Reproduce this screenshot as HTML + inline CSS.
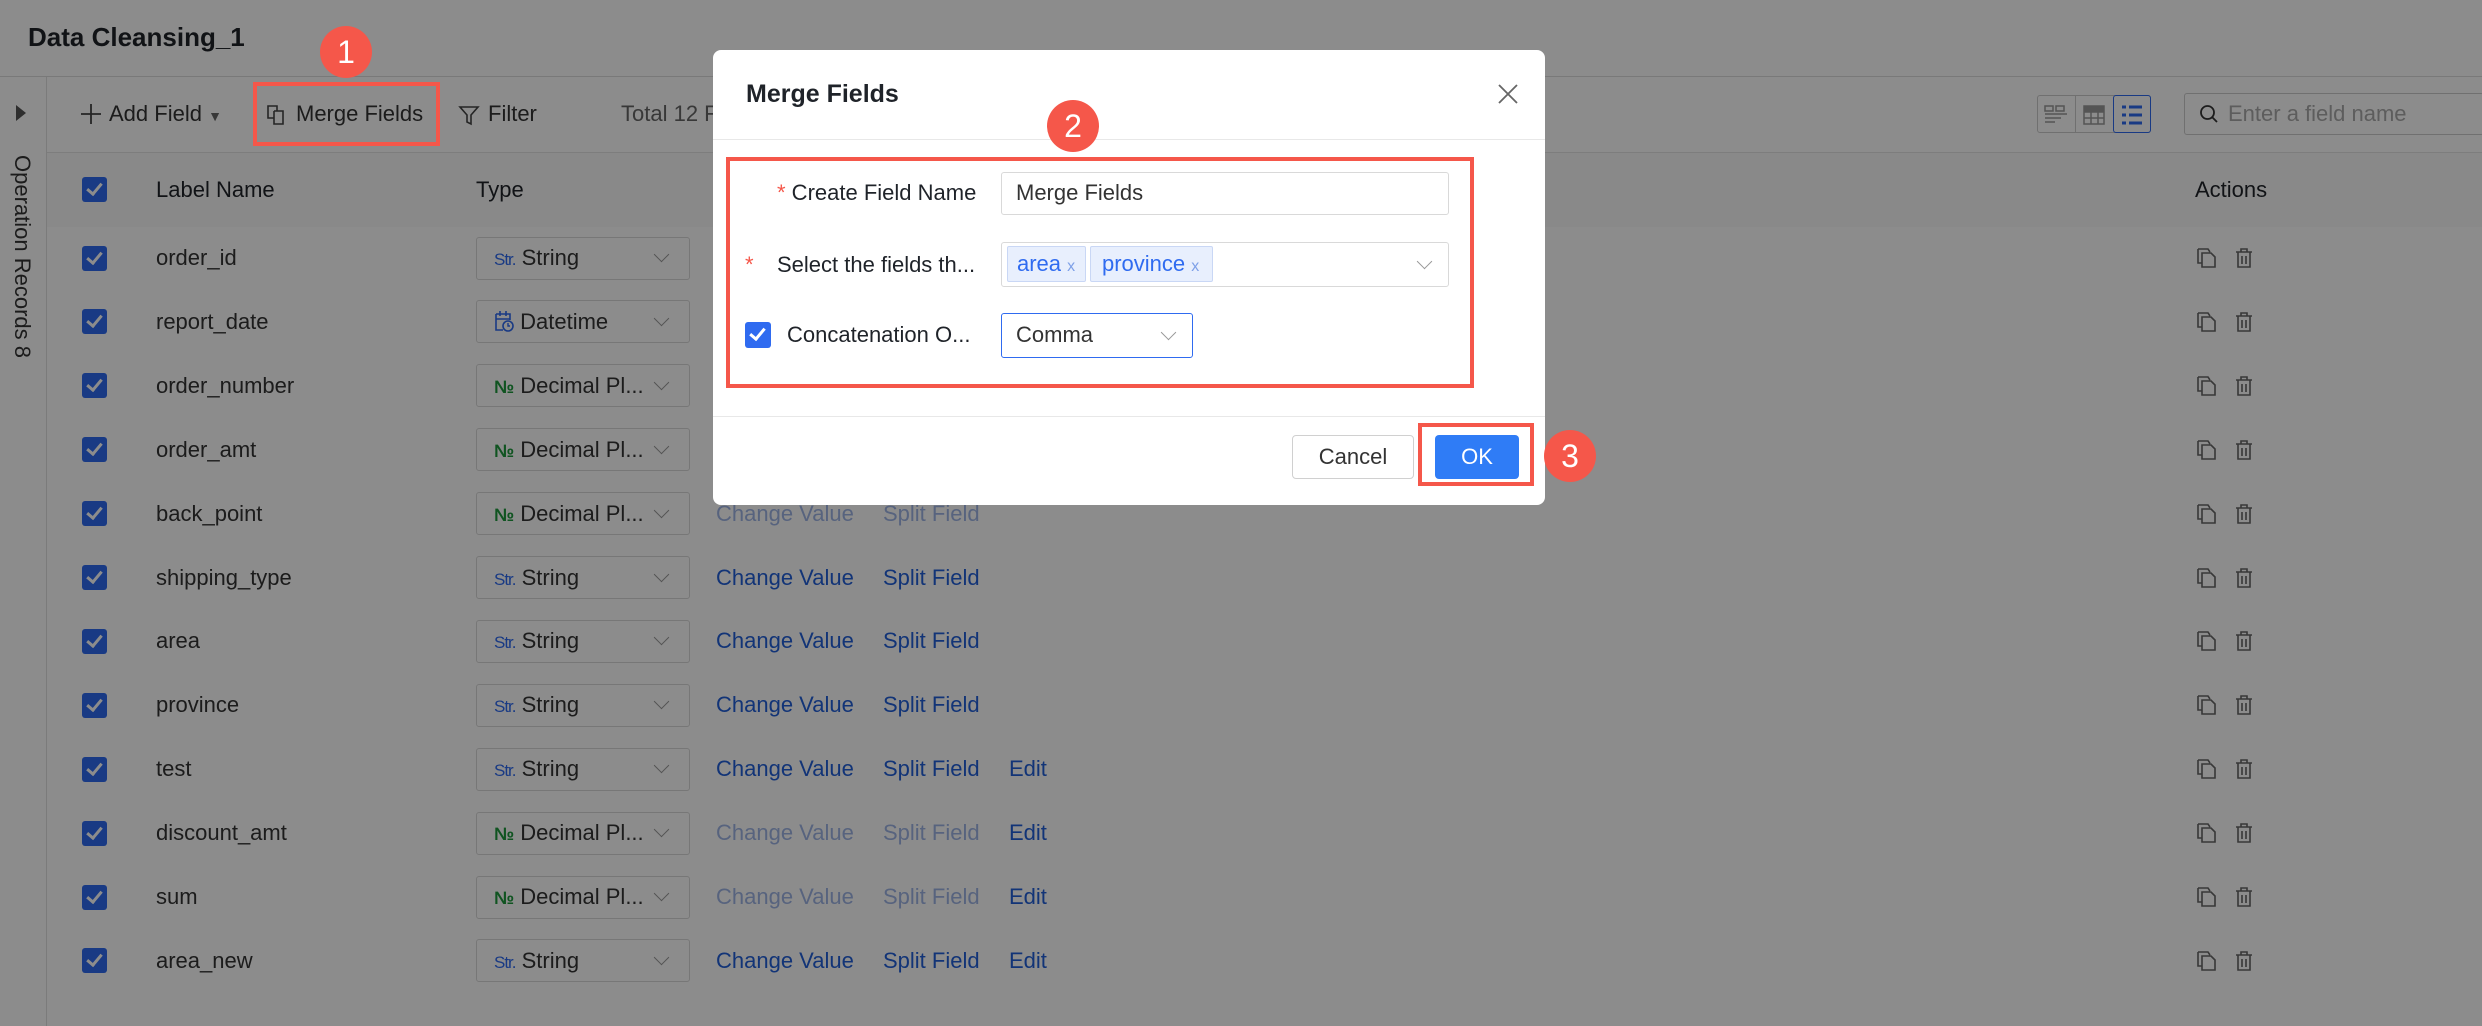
<!DOCTYPE html>
<html><head><meta charset="utf-8"><style>
*{box-sizing:border-box;margin:0;padding:0}
body{width:2482px;height:1026px;overflow:hidden;background:#fff;font-family:"Liberation Sans",Arial,sans-serif;color:#1f2329;position:relative}
.a{position:absolute;white-space:nowrap}
.t{font-size:22px;line-height:26px}
.cb{position:absolute;width:25px;height:25px;background:#2f6bf0;border-radius:3px}
.cb:after{content:"";position:absolute;left:8px;top:3px;width:6px;height:12px;border:solid #fff;border-width:0 3px 3px 0;transform:rotate(40deg)}
.sel{position:absolute;border:1px solid #d9d9d9;border-radius:3px;background:#fff}
.chev{position:absolute;width:11px;height:11px;border:solid #999;border-width:0 1.5px 1.5px 0;transform:rotate(45deg)}
.lk{color:#2260d9}.lkf{color:#9fb5e6}
.ov{position:absolute;left:0;top:0;width:2482px;height:1026px;background:rgba(0,0,0,.45)}
.badge{position:absolute;width:52px;height:52px;border-radius:50%;background:#f5574a;color:#fff;font-size:32px;line-height:52px;text-align:center}
.rb{position:absolute;border:4px solid #f5574a}
</style></head><body>
<div class="a" style="left:28px;top:22px;font-size:26px;font-weight:bold;line-height:30px">Data Cleansing_1</div>
<div class="a" style="left:0;top:76px;width:2482px;height:1px;background:#dcdcdc"></div>
<div class="a" style="left:46px;top:77px;width:1px;height:949px;background:#e0e0e0"></div>
<div class="a" style="left:16px;top:105px;width:0;height:0;border-left:10px solid #555;border-top:8px solid transparent;border-bottom:8px solid transparent"></div>
<div class="a t" style="left:9px;top:155px;transform-origin:0 0;transform:translate(26px,0) rotate(90deg);color:#333">Operation Records 8</div>
<svg class="a" style="left:80px;top:103px" width="22" height="22" viewBox="0 0 22 22"><path d="M11 1v20M1 11h20" stroke="#444" stroke-width="1.8"/></svg>
<div class="a t" style="left:109px;top:101px;color:#333">Add Field <span style="font-size:14px;color:#666">▼</span></div>
<svg class="a" style="left:266px;top:104px" width="20" height="22" viewBox="0 0 20 22"><path d="M2 2h9v5h6v13H8v-6H2z M8 7h3 M8 7v7" fill="none" stroke="#444" stroke-width="1.6"/></svg>
<div class="a t" style="left:296px;top:101px;color:#333">Merge Fields</div>
<svg class="a" style="left:458px;top:104px" width="22" height="22" viewBox="0 0 22 22"><path d="M2 3h18l-7 8v9l-4-2v-7z" fill="none" stroke="#444" stroke-width="1.6"/></svg>
<div class="a t" style="left:488px;top:101px;color:#333">Filter</div>
<div class="a t" style="left:621px;top:101px;color:#666">Total 12 Fields</div>
<div class="a" style="left:2037px;top:95px;width:114px;height:38px;border:1px solid #ccc;border-radius:3px"></div>
<div class="a" style="left:2075px;top:95px;width:1px;height:38px;background:#ccc"></div>
<div class="a" style="left:2113px;top:95px;width:38px;height:38px;border:1.5px solid #2f6bf0;border-radius:3px"></div>
<svg class="a" style="left:2043px;top:104px" width="26" height="22" viewBox="0 0 26 22"><path d="M2 2h8v5H2zM13 2h8v5h-8zM2 10h22M2 14h16M2 18h10" fill="none" stroke="#999" stroke-width="1.5"/></svg>
<svg class="a" style="left:2082px;top:104px" width="24" height="22" viewBox="0 0 24 22"><path d="M2 2h20v18H2zM2 8h20M2 14h20M9 2v18M16 2v18" fill="none" stroke="#999" stroke-width="1.5"/><rect x="2" y="2" width="20" height="6" fill="#999"/></svg>
<svg class="a" style="left:2120px;top:104px" width="24" height="22" viewBox="0 0 24 22"><path d="M2 3h4M9 3h13M2 11h4M9 11h13M2 19h4M9 19h13" stroke="#2f6bf0" stroke-width="3"/></svg>
<div class="a" style="left:2184px;top:93px;width:300px;height:42px;border:1px solid #ccc;border-radius:3px"></div>
<svg class="a" style="left:2199px;top:104px" width="20" height="20" viewBox="0 0 20 20"><circle cx="8.5" cy="8.5" r="6.5" fill="none" stroke="#333" stroke-width="1.8"/><path d="M13 13l5 5" stroke="#333" stroke-width="1.8"/></svg>
<div class="a t" style="left:2228px;top:101px;color:#aaa">Enter a field name</div>
<div class="a" style="left:47px;top:152px;width:2435px;height:1px;background:#e3e3e3"></div>
<div class="a" style="left:47px;top:153px;width:2435px;height:74px;background:#fafafa"></div>
<div class="cb" style="left:82px;top:177px"></div>
<div class="a t" style="left:156px;top:177px">Label Name</div>
<div class="a t" style="left:476px;top:177px">Type</div>
<div class="a t" style="left:2195px;top:177px">Actions</div>
<div id="rows"></div>
<script>
var R=[["order_id","s","","",""],["report_date","d","","",""],["order_number","n","","",""],["order_amt","n","","",""],["back_point","n","f","f",""],["shipping_type","s","l","l",""],["area","s","l","l",""],["province","s","l","l",""],["test","s","l","l","e"],["discount_amt","n","f","f","e"],["sum","n","f","f","e"],["area_new","s","l","l","e"]];
var h="";
R.forEach(function(r,i){var c=258+i*63.9;var top=c-13;
h+='<div class="cb" style="left:82px;top:'+(c-12.5)+'px"></div>';
h+='<div class="a t" style="left:156px;top:'+top+'px;color:#333">'+r[0]+'</div>';
h+='<div class="sel" style="left:476px;top:'+(c-21.5)+'px;width:214px;height:43px"></div>';
var ic,tx;
if(r[1]=="s"){ic='<span style="color:#2f6bf0;font-size:17px;letter-spacing:-1px">Str.</span>';tx="String";}
else if(r[1]=="d"){ic='<svg width="20" height="22" viewBox="0 0 20 22" style="vertical-align:-3px"><path d="M2 4h14v6M2 4v16h7M2 9h14M6 1v5M12 1v5" fill="none" stroke="#2f6bf0" stroke-width="1.6"/><circle cx="14" cy="16" r="5" fill="none" stroke="#2f6bf0" stroke-width="1.6"/><path d="M14 13v3h2" fill="none" stroke="#2f6bf0" stroke-width="1.4"/></svg>';tx="Datetime";}
else{ic='<span style="color:#1e9a3c;font-size:18px;font-weight:bold">№</span>';tx="Decimal Pl...";}
h+='<div class="a t" style="left:494px;top:'+top+'px;color:#333">'+ic+' '+tx+'</div>';
h+='<div class="chev" style="left:656px;top:'+(c-9)+'px"></div>';
if(r[2])h+='<div class="a t '+(r[2]=="f"?"lkf":"lk")+'" style="left:716px;top:'+top+'px">Change Value</div>';
if(r[3])h+='<div class="a t '+(r[3]=="f"?"lkf":"lk")+'" style="left:883px;top:'+top+'px">Split Field</div>';
if(r[4])h+='<div class="a t lk" style="left:1009px;top:'+top+'px">Edit</div>';
h+='<svg class="a" style="left:2196px;top:'+(c-11)+'px" width="22" height="22" viewBox="0 0 22 22"><path d="M2 2h10l2 3M6 6h9l4 4v10H6z M2 2v14h4" fill="none" stroke="#666" stroke-width="1.6"/></svg>';
h+='<svg class="a" style="left:2234px;top:'+(c-11)+'px" width="20" height="22" viewBox="0 0 20 22"><path d="M2 5h16M7 5V2h6v3M4 5v15h12V5M8 9v8M12 9v8" fill="none" stroke="#666" stroke-width="1.6"/></svg>';
});
document.getElementById("rows").innerHTML=h;
</script>
<div class="ov"></div>
<div class="badge" style="left:320px;top:26px">1</div>
<div class="rb" style="left:253px;top:82px;width:187px;height:64px"></div>
<div class="a" style="left:713px;top:50px;width:832px;height:455px;background:#fff;border-radius:8px"></div>
<div class="a" style="left:746px;top:79px;font-size:25px;font-weight:bold;line-height:30px">Merge Fields</div>
<svg class="a" style="left:1497px;top:83px" width="22" height="22" viewBox="0 0 22 22"><path d="M2 2l18 18M20 2L2 20" stroke="#666" stroke-width="1.8"/></svg>
<div class="a" style="left:713px;top:139px;width:832px;height:1px;background:#e8e8e8"></div>
<div class="a t" style="left:777px;top:180px"><span style="color:#f5574a">*</span> Create Field Name</div>
<div class="sel" style="left:1001px;top:172px;width:448px;height:43px"></div>
<div class="a t" style="left:1016px;top:180px;color:#333">Merge Fields</div>
<div class="a t" style="left:745px;top:252px;color:#f5574a">*</div>
<div class="a t" style="left:777px;top:252px">Select the fields th...</div>
<div class="sel" style="left:1001px;top:242px;width:448px;height:45px"></div>
<div class="a t" style="left:1007px;top:246px;width:79px;height:36px;background:#e8effd;border:1px solid #c9d7f5;border-radius:2px;line-height:34px;padding-left:9px;color:#2f6bf0">area <span style="color:#7ea0e8;font-size:16px">x</span></div>
<div class="a t" style="left:1090px;top:246px;width:123px;height:36px;background:#e8effd;border:1px solid #c9d7f5;border-radius:2px;line-height:34px;padding-left:11px;color:#2f6bf0">province <span style="color:#7ea0e8;font-size:16px">x</span></div>
<div class="chev" style="left:1419px;top:256px"></div>
<div class="cb" style="left:745px;top:322px;width:26px;height:26px"></div>
<div class="a t" style="left:787px;top:322px">Concatenation O...</div>
<div class="sel" style="left:1001px;top:313px;width:192px;height:45px;border-color:#2f6bf0"></div>
<div class="a t" style="left:1016px;top:322px;color:#333">Comma</div>
<div class="chev" style="left:1163px;top:327px"></div>
<div class="a" style="left:713px;top:416px;width:832px;height:1px;background:#e8e8e8"></div>
<div class="a t" style="left:1292px;top:435px;width:122px;height:44px;border:1px solid #d0d0d0;border-radius:4px;line-height:42px;text-align:center;color:#333">Cancel</div>
<div class="a t" style="left:1435px;top:435px;width:84px;height:44px;background:#2f7cf6;border-radius:4px;line-height:44px;text-align:center;color:#fff">OK</div>
<div class="badge" style="left:1047px;top:100px">2</div>
<div class="rb" style="left:726px;top:157px;width:748px;height:231px"></div>
<div class="rb" style="left:1418px;top:423px;width:116px;height:63px"></div>
<div class="badge" style="left:1544px;top:430px">3</div>
</body></html>
